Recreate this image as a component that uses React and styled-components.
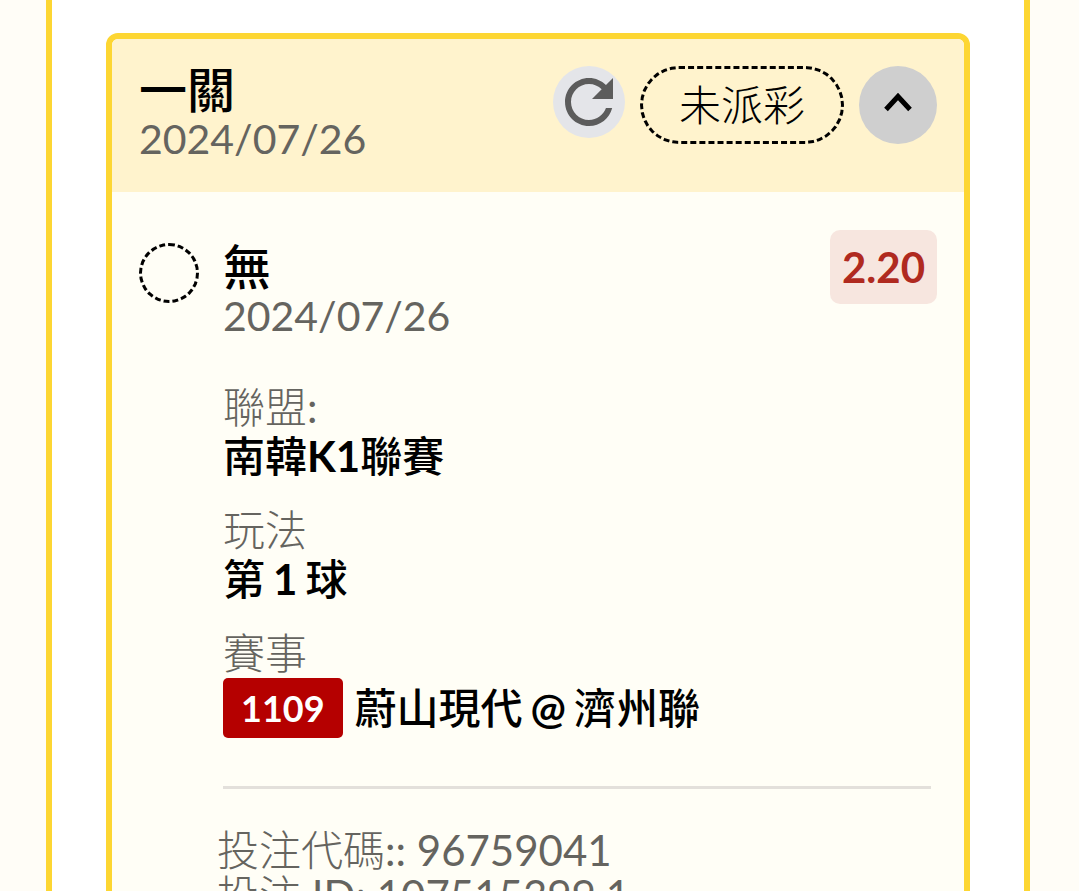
import React, { useState } from "react";

import styled, { createGlobalStyle } from "styled-components";

const GlobalStyle = createGlobalStyle`
  :root {
    --mainYellow: #fdd632;
    --paleYellow: #fff3cd;
    --cream: #fffef6;
    --mainRed: #b50000;
    --mutedText: #65645f;
    --textFont: Lato, "Noto Sans CJK TC", sans-serif;
  }
  * {
    box-sizing: border-box;
  }
  html {
    scrollbar-width: none;
  }
  body {
    margin: 0;
    background: #fffdf7;
    color: #000;
    font-family: var(--textFont);
    font-size: 42px;
  }
`;

const bet = {
  title: "一關",
  date: "2024/07/26",
  status: "未派彩",
};

const pick = {
  name: "無",
  date: "2024/07/26",
  odds: "2.20",
  matchNo: "1109",
  home: "蔚山現代",
  away: "濟州聯",
};

export default function App() {
  const [open, setOpen] = useState(true);

  return (
    <>
      <GlobalStyle />
      <Frame>
        <Card>
          <CardHeader>
            <Heading>
              <Title>{bet.title}</Title>
              <DateText>{bet.date}</DateText>
            </Heading>
            <Actions>
              <RoundButton type="button" aria-label="refresh" $size={72} $color="#e4e5e9">
                <RefreshIcon />
              </RoundButton>
              <Status>{bet.status}</Status>
              <RoundButton
                type="button"
                aria-label="toggle"
                aria-expanded={open}
                $size={78}
                $color="#cfcfcf"
                onClick={() => setOpen(!open)}
              >
                <ChevronIcon />
              </RoundButton>
            </Actions>
          </CardHeader>
          {open && (
            <CardBody>
              <PickRow>
                <StatusRing />
                <PickHeading>
                  <Title as="h3">{pick.name}</Title>
                  <DateText>{pick.date}</DateText>
                </PickHeading>
                <Odds>{pick.odds}</Odds>
              </PickRow>
              <Details>
                <div>
                  <Label>聯盟<Latin>:</Latin></Label>
                  <Value>南韓<Latin $bold>K1</Latin>聯賽</Value>
                </div>
                <div>
                  <Label>玩法</Label>
                  <Value $gap={8}>
                    第 <Latin $bold>1</Latin> 球
                  </Value>
                </div>
                <div>
                  <Label>賽事</Label>
                  <MatchRow>
                    <MatchNo>{pick.matchNo}</MatchNo>
                    <Value $gap={8}>
                      {pick.home} <Latin $bold>@</Latin> {pick.away}
                    </Value>
                  </MatchRow>
                </div>
              </Details>
              <Divider />
              <Meta>
                <li>投注代碼<Latin>:: 96759041</Latin></li>
                <li>投注<Latin> ID: 107515399.1</Latin></li>
              </Meta>
            </CardBody>
          )}
        </Card>
      </Frame>
    </>
  );
}

function RefreshIcon() {
  return (
    <svg width="72" height="72" viewBox="0 0 24 24" aria-hidden="true">
      <path
        d="M17.65 6.35C16.2 4.9 14.21 4 12 4c-4.42 0-7.99 3.58-7.99 8s3.57 8 7.99 8c3.73 0 6.84-2.55 7.73-6h-2.08c-.82 2.33-3.04 4-5.65 4-3.31 0-6-2.69-6-6s2.69-6 6-6c1.66 0 3.14.69 4.22 1.78L13 11h7V4l-2.35 2.35z"
        fill="#5c5c5c"
      />
    </svg>
  );
}

function ChevronIcon() {
  return (
    <svg width="78" height="78" viewBox="0 0 78 78" aria-hidden="true">
      <path d="M27 43.5L39 30.5L51 43.5" fill="none" stroke="#000" strokeWidth="5" />
    </svg>
  );
}

const Frame = styled.main`
  min-height: 100vh;
  margin: 0 49px 0 46px;
  padding: 33px 54px;
  background: #fff;
  border: solid var(--mainYellow);
  border-width: 0 6px;
`;

const Card = styled.section`
  overflow: hidden;
  background: var(--cream);
  border: 6px solid var(--mainYellow);
  border-radius: 12px;
`;

const CardHeader = styled.header`
  display: flex;
  justify-content: space-between;
  align-items: flex-start;
  padding: 27px;
  background: var(--paleYellow);
`;

const Heading = styled.div`
  min-width: 0;
`;

const Title = styled.h2`
  margin: 0;
  font-size: 48px;
  font-weight: 500;
  line-height: 48px;
`;

const DateText = styled.p`
  margin: 0 0 2px;
  color: var(--mutedText);
  font-size: 41px;
  line-height: 49px;
`;

const Actions = styled.div`
  display: flex;
  align-items: flex-start;
  gap: 15px;
`;

const RoundButton = styled.button`
  width: ${(props) => props.$size}px;
  height: ${(props) => props.$size}px;
  padding: 0;
  border: 0;
  border-radius: 50%;
  background: ${(props) => props.$color};
  cursor: pointer;

  svg {
    display: block;
  }
`;

const Status = styled.span`
  padding: 0 36px;
  border: 3px dashed #000;
  border-radius: 39px;
  font-weight: 300;
  line-height: 72px;
`;

const CardBody = styled.div`
  padding: 38px 27px;
`;

const PickRow = styled.div`
  display: flex;
  align-items: flex-start;
`;

const StatusRing = styled.span`
  width: 60px;
  height: 60px;
  margin: 13px 24px 0 0;
  border: 3px dashed #000;
  border-radius: 50%;
`;

const PickHeading = styled.div`
  flex: 1;
  padding-top: 13px;
`;

const Odds = styled.strong`
  padding: 0 12px;
  border-radius: 10px;
  background: #f7e6df;
  color: #b02a1f;
  font-weight: 700;
  line-height: 74px;
`;

const Details = styled.div`
  display: grid;
  gap: 25px;
  margin-top: 41px;
  padding-left: 84px;
  line-height: 49px;
`;

const Label = styled.div`
  color: var(--mutedText);
  font-weight: 300;
`;

const Latin = styled.span`
  font-weight: ${(props) => (props.$bold ? 700 : 400)};
`;

const Value = styled.div`
  display: flex;
  align-items: baseline;
  gap: ${(props) => props.$gap || 0}px;
  font-weight: 500;
`;

const MatchRow = styled.div`
  display: flex;
  align-items: center;
  gap: 12px;
`;

const MatchNo = styled.span`
  padding: 0 18px;
  border-radius: 5px;
  background: var(--mainRed);
  color: #fff;
  font-size: 36px;
  font-weight: 700;
  line-height: 60px;
`;

const Divider = styled.hr`
  height: 3px;
  margin: 48px 6px 39px 84px;
  border: 0;
  background: #e3e0db;
`;

const Meta = styled.ul`
  margin: 0;
  padding: 0 0 0 78px;
  color: var(--mutedText);
  font-weight: 300;
  line-height: 45px;
  list-style: none;
`;
